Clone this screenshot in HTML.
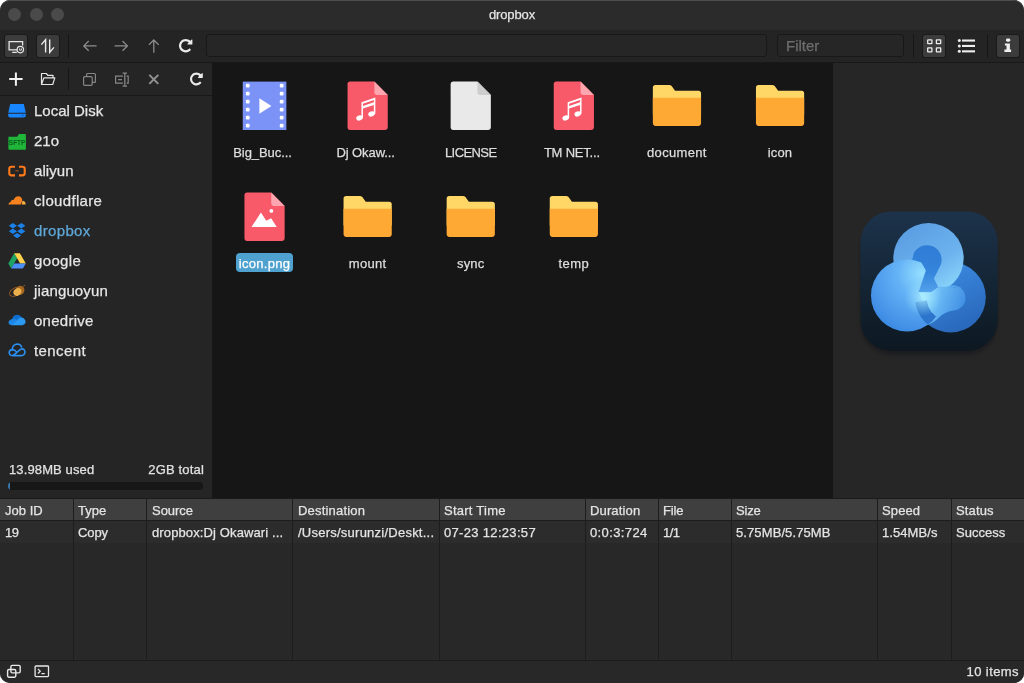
<!DOCTYPE html>
<html>
<head>
<meta charset="utf-8">
<title>dropbox</title>
<style>
*{box-sizing:border-box;margin:0;padding:0}
html,body{width:1024px;height:683px;overflow:hidden;background:#fff;font-family:"Liberation Sans",sans-serif;}
#win{-webkit-text-stroke:.25px;position:absolute;left:0;top:0;width:1024px;height:683px;border-radius:10px;overflow:hidden;background:#252525;opacity:.999;-webkit-font-smoothing:antialiased}
#win::after{content:"";position:absolute;left:0;top:0;right:0;bottom:0;border-radius:10px;box-shadow:inset 0 1px 0 rgba(255,255,255,.16);pointer-events:none;}
.abs{position:absolute}
#title{left:0;top:0;width:1024px;height:30px;background:#2b2b2b;}
#title .t{position:absolute;left:0;width:1024px;top:7px;text-align:center;font-size:13px;line-height:16px;color:#e4e4e4}
.dot{position:absolute;top:8px;width:13px;height:13px;border-radius:50%;background:#4a4a4a}
#tool{left:0;top:30px;width:1024px;height:33px;background:#242424;border-bottom:1px solid #181818;}
.btn{position:absolute;width:22px;height:22px;border-radius:2px;background:#3c3c3c;box-shadow:0 0 0 1px #1a1a1a}
.sep{position:absolute;width:1px;background:#161616}
.inp{position:absolute;height:23px;top:4px;background:#262626;border:1px solid #181818;border-radius:3px}
#side{left:0;top:63px;width:212px;height:435px;background:#252525;}
#sidetool{left:0;top:0;width:212px;height:33px;border-bottom:1px solid #181818;background:#252525}
.item{position:absolute;left:34px;font-size:15px;line-height:20px;color:#e6e6e6;white-space:nowrap}
.ico{position:absolute;left:8px;width:18px;height:18px}
#main{left:212px;top:63px;width:621px;height:435px;background:#161616;}
#right{left:833px;top:63px;width:191px;height:435px;background:#262626;}
.file{position:absolute;width:103px;height:19px;text-align:center;font-size:13px;color:#dedede;line-height:17px;white-space:nowrap}
.lbl{display:inline-block;height:19px;padding:2px 3px 0 3px;border-radius:4px}
.lbl.sel{background:#4fa2d0;color:#fff}
#jobs{filter:grayscale(1);left:0;top:498px;width:1024px;height:162px;background:#282828;border-top:1px solid #1a1a1a;font-size:13px;color:#e2e2e2}
#status{filter:grayscale(1);left:0;top:660px;width:1024px;height:23px;background:#282828;border-top:1px solid #1b1b1b;font-size:13px;color:#e2e2e2}
.th,.td{font-size:13px;line-height:22px;white-space:nowrap;color:#e4e4e4}
</style>
</head>
<body>
<div id="win">
<div id="title" class="abs">
  <div class="dot" style="left:8px"></div><div class="dot" style="left:30px"></div><div class="dot" style="left:51px"></div>
  <div class="t"><span class="ls" style="letter-spacing:-0.14px">dropbox</span></div>
</div>
<div id="tool" class="abs">
  <div class="btn" style="left:5px;top:5px"></div>
  <svg class="abs" style="left:5px;top:5px" width="22" height="22" viewBox="0 0 22 22" fill="none" stroke="#e6e6e6" stroke-width="1.3">
    <path d="M12.2 14.9H4.1V6.6H17.6V10.4"/><path d="M7.2 17.4H11.8" stroke-width="1.2"/>
    <circle cx="15.3" cy="14.6" r="3.2" stroke-width="1.2"/><path d="M14.6 13.4V15.2H16.4V13.4" stroke-width=".9"/>
  </svg>
  <div class="btn" style="left:37px;top:5px"></div>
  <svg class="abs" style="left:37px;top:5px" width="22" height="22" viewBox="0 0 22 22" fill="none" stroke="#ededed" stroke-width="1.4" stroke-linejoin="miter">
    <path d="M4.4 9.6L8.6 4.6V17.6"/><path d="M12.7 4.4V17.4L16.9 12.4"/>
  </svg>
  <div class="sep" style="left:68px;top:4px;height:24px"></div>
  <svg class="abs" style="left:82px;top:8px" width="16" height="16" viewBox="0 0 16 16" fill="none" stroke="#8c8c8c" stroke-width="1.3">
    <path d="M14.6 7.9H1.8M6.7 3L1.8 7.9L6.7 12.8"/>
  </svg>
  <svg class="abs" style="left:113px;top:8px" width="16" height="16" viewBox="0 0 16 16" fill="none" stroke="#8c8c8c" stroke-width="1.3">
    <path d="M1.6 7.9H14.4M9.5 3L14.4 7.9L9.5 12.8"/>
  </svg>
  <svg class="abs" style="left:146px;top:8px" width="16" height="16" viewBox="0 0 16 16" fill="none" stroke="#8c8c8c" stroke-width="1.3">
    <path d="M7.8 14.8V2M2.9 6.9L7.8 2L12.7 6.9"/>
  </svg>
  <svg class="abs" style="left:179px;top:9px" width="14" height="14" viewBox="0 0 1604.776 1604.776"><path fill="#ebebeb" d="M1536 128v448q0 26-19 45t-45 19h-448q-42 0-59-40-17-39 14-69l138-138q-148-137-349-137-104 0-198.500 40.500t-163.500 109.500-109.500 163.500-40.500 198.500 40.500 198.500 109.500 163.500 163.500 109.500 198.500 40.500q119 0 225-52t179-147q7-10 23-12 15 0 25 9l137 138q9 8 9.500 20.500t-7.500 22.500q-109 132-264 204.500t-327 72.500q-156 0-298-61t-245-164-164-245-61-298 61-298 164-245 245-164 298-61q147 0 284.500 55.500t244.500 156.500l130-129q29-31 70-14 39 17 39 59z"/></svg>
  <div class="inp" style="left:206px;width:561px"></div>
  <div class="inp" style="left:777px;width:127px"></div>
  <div class="abs" style="filter:grayscale(1);left:786px;top:7px;font-size:15px;line-height:17px;color:#6e6e6e">Filter</div>
  <div class="sep" style="left:913px;top:4px;height:24px"></div>
  <div class="btn" style="left:923px;top:5px"></div>
  <svg class="abs" style="left:923px;top:5px" width="22" height="22" viewBox="0 0 22 22" fill="none" stroke="#ededed" stroke-width="1.3">
    <rect x="4.7" y="4.8" width="4.2" height="3.9" rx=".4"/><rect x="13.4" y="4.8" width="4.3" height="3.9" rx=".4"/><rect x="4.7" y="12.9" width="4.2" height="4" rx=".4"/><rect x="13.4" y="12.9" width="4.3" height="4" rx=".4"/>
  </svg>
  <svg class="abs" style="left:955px;top:5px" width="22" height="22" viewBox="0 0 22 22" fill="#ededed">
    <rect x="7" y="4.5" width="13" height="2.1"/><rect x="7" y="9.9" width="13" height="2.1"/><rect x="7" y="15.3" width="13" height="2.1"/>
    <circle cx="4.3" cy="5.55" r="1.5"/><circle cx="4.3" cy="10.95" r="1.5"/><circle cx="4.3" cy="16.35" r="1.5"/>
  </svg>
  <div class="sep" style="left:987px;top:4px;height:24px"></div>
  <div class="btn" style="left:997px;top:5px"></div>
  <svg class="abs" style="left:997px;top:5px" width="22" height="22" viewBox="0 0 22 22" fill="#f0f0f0">
    <rect x="9" y="3.5" width="4.3" height="3.2" rx="1.4"/><path d="M7.9 8.4H12.9V14.6H14.1V17H7.4V14.6H9.5V10.6H7.9Z"/>
  </svg>
</div>
<div id="side" class="abs">
  <div id="sidetool" class="abs">
    <svg class="abs" style="left:8px;top:8px" width="16" height="17" viewBox="0 -0.2 16 17" stroke="#f2f2f2" stroke-width="2" fill="none"><path d="M7.9 1.2V14.6M1.2 7.9H14.6"/></svg>
    <svg class="abs" style="left:40px;top:8px" width="16" height="17" viewBox="0 -0.2 16 17" stroke="#e6e6e6" stroke-width="1.2" fill="none" stroke-linejoin="round"><path d="M1.5 13.3V2.3H6.3L7.8 4.1H13V6.7M1.5 13.3L3.9 6.7H14.8L12.7 13.3Z"/></svg>
    <div class="sep" style="left:68px;top:5px;height:22px"></div>
    <svg class="abs" style="left:82px;top:8px" width="16" height="17" viewBox="0 -0.8 16 17" stroke="#868686" stroke-width="1.2" fill="none"><rect x="1.6" y="4.9" width="8.6" height="8.6" rx="1"/><path d="M4.6 4.9V2.6Q4.6 1.7 5.5 1.7H12.5Q13.4 1.7 13.4 2.6V9.6Q13.4 10.5 12.5 10.5H10.2"/></svg>
    <svg class="abs" style="left:114px;top:8px" width="16" height="17" viewBox="0 -0.8 16 17" stroke="#868686" stroke-width="1.2" fill="none"><path d="M9 4.4H1.6V11.4H9M12.6 4.4H14.2V11.4H12.6M4 7.9H8"/><path d="M8.6 1.4H13M8.6 14.4H13M10.8 1.4V14.4" stroke-width="1.3"/></svg>
    <svg class="abs" style="left:146px;top:8px" width="16" height="17" viewBox="0 -0.8 16 17" stroke="#909090" stroke-width="2" fill="none"><path d="M3.3 3.1L12.3 12.1M12.3 3.1L3.3 12.1"/></svg>
    <svg class="abs" style="left:190px;top:9px" width="13" height="14" viewBox="0 -72 1560 1680"><path fill="#ebebeb" d="M1536 128v448q0 26-19 45t-45 19h-448q-42 0-59-40-17-39 14-69l138-138q-148-137-349-137-104 0-198.500 40.500t-163.500 109.500-109.500 163.500-40.500 198.500 40.500 198.500 109.500 163.500 163.500 109.500 198.500 40.500q119 0 225-52t179-147q7-10 23-12 15 0 25 9l137 138q9 8 9.500 20.500t-7.500 22.500q-109 132-264 204.500t-327 72.500q-156 0-298-61t-245-164-164-245-61-298 61-298 164-245 245-164 298-61q147 0 284.500 55.500t244.500 156.500l130-129q29-31 70-14 39 17 39 59z"/></svg>
  </div>
  <svg class="ico" style="top:39px" viewBox="0 0 18 18"><path fill="#1786ff" d="M2.2 2.1H15.8L17.8 10.7H0.2Z"/><path fill="#1786ff" d="M0.2 11.7H17.8V13.6Q17.8 15.6 15.8 15.6H2.2Q0.2 15.6 0.2 13.6Z"/><circle cx="14.8" cy="13.5" r=".7" fill="#0d4f9c"/></svg>
  <div class="item" style="top:38px"><span class="ls" style="letter-spacing:0.0px">Local Disk</span></div>
  <svg class="ico" style="top:69px" viewBox="0 0 18 18"><path fill="#1fb63a" d="M0.4 4.7H9.2L11 1.9H17.1Q17.9 1.9 17.9 2.7V16.9Q17.9 17.7 17.1 17.7H1.2Q0.4 17.7 0.4 16.9Z"/><text x="9.1" y="13.4" font-family="Liberation Sans, sans-serif" font-weight="bold" font-size="6.6" text-anchor="middle" fill="#0b5c1b" textLength="16.5" lengthAdjust="spacingAndGlyphs">SFTP</text></svg>
  <div class="item" style="top:68px">21o</div>
  <svg class="ico" style="top:99px" viewBox="0 0 18 18" fill="none" stroke="#ff7a1a" stroke-width="2.1"><path d="M7 4.7H3.4Q1.3 4.7 1.3 6.8V11.3Q1.3 13.4 3.4 13.4H7"/><path d="M11 4.7H14.6Q16.7 4.7 16.7 6.8V11.3Q16.7 13.4 14.6 13.4H11"/><path d="M7.4 8.8H10.6" stroke="#c2601c" stroke-width=".9"/></svg>
  <div class="item" style="top:98px"><span class="ls" style="letter-spacing:0.09px">aliyun</span></div>
  <svg class="ico" style="top:129px" viewBox="0 0 18 18"><path fill="#f6821f" d="M0.3 12.5Q0.5 10.6 2.6 9.9Q3.3 7.6 5.7 7.9Q7 4.2 10.3 4.2Q13.7 4.4 14.3 8L13 12.5Z"/><path fill="#fbad41" d="M13.7 12.5L14.5 8.7Q17.5 8.9 17.7 12.5Z"/></svg>
  <div class="item" style="top:128px"><span class="ls" style="letter-spacing:0.31px">cloudflare</span></div>
  <svg class="ico" style="top:159px" viewBox="0 0 18 18" fill="#1b80e8"><path d="M4.90 0.95L9.00 3.70L4.90 6.45L0.80 3.70Z"/><path d="M13.30 0.95L17.40 3.70L13.30 6.45L9.20 3.70Z"/><path d="M4.90 6.55L9.00 9.30L4.90 12.05L0.80 9.30Z"/><path d="M13.30 6.55L17.40 9.30L13.30 12.05L9.20 9.30Z"/><path d="M9.10 11.00L13.10 13.60L9.10 16.20L5.10 13.60Z"/></svg>
  <div class="item" style="top:158px;color:#5fa8d8"><span class="ls" style="letter-spacing:0.35px">dropbox</span></div>
  <svg class="ico" style="top:189px" viewBox="0 0 18 18"><path fill="#1ea362" d="M6.2 1.2L9.1 6.2L3.2 16.4L0.3 11.4Z"/><path fill="#ffd04a" d="M6.2 1.2H11.9L17.8 11.4H12.1Z"/><path fill="#4a8ff7" d="M6.1 11.4H17.8L14.9 16.4H3.2Z"/></svg>
  <div class="item" style="top:188px"><span class="ls" style="letter-spacing:0.36px">google</span></div>
  <svg class="ico" style="top:219px" viewBox="0 0 18 18"><ellipse cx="7.6" cy="9.8" rx="6.6" ry="3.9" transform="rotate(-27 7.6 9.8)" fill="none" stroke="#9a5a22" stroke-width=".9"/><ellipse cx="12" cy="8.4" rx="4.3" ry="4.8" transform="rotate(28 12 8.4)" fill="#a5661f"/><ellipse cx="9.4" cy="9.9" rx="4.2" ry="3.5" transform="rotate(-38 9.4 9.9)" fill="#ebb04c"/><path d="M15.2 4.6L16.9 2.9" stroke="#a5661f" stroke-width="1"/></svg>
  <div class="item" style="top:218px"><span class="ls" style="letter-spacing:0.14px">jianguoyun</span></div>
  <svg class="ico" style="top:249px" viewBox="0 0 18 18"><g transform="translate(0,-1.6) scale(1,.97)"><path fill="#0f6fd0" d="M4.2 9.2Q4.8 5.4 8.6 4.6Q12.2 4.2 13.8 7.4L9 11.2Z"/><path fill="#1d86e6" d="M2.6 9.6Q5.4 7.6 8.4 9.6L13 13.6L3.6 15.2Q0.4 14.6 0.5 12.2Q0.6 10.2 2.6 9.6Z"/><path fill="#2b9af3" d="M10.6 8.6Q13.4 6.4 16 8.4Q17.8 10 17.6 12.2Q17.2 15 14.4 15.4H3.6Q7.4 12.2 10.6 8.6Z"/></g></svg>
  <div class="item" style="top:248px"><span class="ls" style="letter-spacing:0.27px">onedrive</span></div>
  <svg class="ico" style="top:279px" viewBox="0 0 18 18" fill="none" stroke="#2a90f2" stroke-width="1.6" stroke-linecap="round"><g transform="translate(0,-1.7) scale(1,.97)"><path d="M4.2 9.8Q4.4 4.4 9 3.8Q12.4 3.8 13.6 6.8"/><path d="M5 15.8L12.4 9.4Q14.6 8 16.2 9.8Q17.8 12.4 16 14.6Q15 15.8 13 15.8H4.8Q1.2 15.6 1.2 12.6Q1.4 9.6 4.6 9.6Q6.8 9.8 8 11.4"/></g></svg>
  <div class="item" style="top:278px"><span class="ls" style="letter-spacing:0.4px">tencent</span></div>
  <div class="abs sb" style="left:9px;top:399px;font-size:13px;line-height:16px;color:#e2e2e2"><span class="ls" style="letter-spacing:0.12px">13.98MB used</span></div>
  <div class="abs sb" style="right:8px;top:399px;font-size:13px;line-height:16px;color:#e2e2e2"><span class="ls" style="letter-spacing:0.17px">2GB total</span></div>
  <div class="abs" style="left:8px;top:419px;width:195px;height:8px;border-radius:4px;background:#171717;overflow:hidden"><div style="width:2px;height:8px;background:#3a78b0"></div></div>
</div>
<div id="main" class="abs">
<svg class="abs" style="left:30px;top:18px" width="45" height="50" viewBox="-0.55 -0.3 45 50"><rect x="0.2" y="0.3" width="43.6" height="48.4" fill="#7b92f6"/><g fill="#fff"><rect x="3.3" y="2.5" width="3.8" height="3.8" rx="1.1"/><rect x="3.3" y="10.5" width="3.8" height="3.8" rx="1.1"/><rect x="3.3" y="18.5" width="3.8" height="3.8" rx="1.1"/><rect x="3.3" y="26.5" width="3.8" height="3.8" rx="1.1"/><rect x="3.3" y="34.5" width="3.8" height="3.8" rx="1.1"/><rect x="3.3" y="42.5" width="3.8" height="3.8" rx="1.1"/><rect x="37.2" y="2.5" width="3.8" height="3.8" rx="1.1"/><rect x="37.2" y="10.5" width="3.8" height="3.8" rx="1.1"/><rect x="37.2" y="18.5" width="3.8" height="3.8" rx="1.1"/><rect x="37.2" y="26.5" width="3.8" height="3.8" rx="1.1"/><rect x="37.2" y="34.5" width="3.8" height="3.8" rx="1.1"/><rect x="37.2" y="42.5" width="3.8" height="3.8" rx="1.1"/></g><path d="M16.8 16.9V32.5L28.9 24.7Z" fill="#fff"/></svg>
<div class="file" style="left:-0.95px;top:78.8px"><span class="lbl"><span class="ls" style="letter-spacing:-0.05px">Big_Buc...</span></span></div>
<svg class="abs" style="left:135px;top:18px" width="42" height="50" viewBox="-0.15 -0.3 42 50"><path fill="#f95a6a" d="M3 0.3H27.2L40.6 13.6V45.7Q40.6 48.7 37.6 48.7H3Q0.4 48.7 0.4 45.7V3Q0.4 0.3 3 0.3Z"/><path fill="#fda6b0" d="M27.2 0.3L40.6 13.6H29.6Q27.2 13.6 27.2 11.2Z"/><g fill="#fff"><ellipse cx="12.4" cy="36.6" rx="3.4" ry="2.5" transform="rotate(-20 12.4 36.6)"/><ellipse cx="24.4" cy="32.6" rx="3.4" ry="2.5" transform="rotate(-20 24.4 32.6)"/><path d="M14.3 21L28.2 16.3V32.4H26.7V23.6L15.8 27.3V36.4H14.3Z"/><path d="M15.8 22.4V24.6L26.7 20.9V18.7Z" fill="#f95a6a"/></g></svg>
<div class="file" style="left:102.15px;top:78.8px"><span class="lbl"><span class="ls" style="letter-spacing:-0.11px">Dj Okaw...</span></span></div>
<svg class="abs" style="left:238px;top:18px" width="42" height="50" viewBox="-0.25 -0.3 42 50"><path fill="#e9e9e9" d="M3 0.3H27.2L40.6 13.6V45.7Q40.6 48.7 37.6 48.7H3Q0.4 48.7 0.4 45.7V3Q0.4 0.3 3 0.3Z"/><path fill="#cdcdcd" d="M27.2 0.3L40.6 13.6H29.6Q27.2 13.6 27.2 11.2Z"/></svg>
<div class="file" style="left:207.25px;top:78.8px"><span class="lbl"><span class="ls" style="letter-spacing:-0.59px">LICENSE</span></span></div>
<svg class="abs" style="left:341px;top:18px" width="42" height="50" viewBox="-0.35 -0.3 42 50"><path fill="#f95a6a" d="M3 0.3H27.2L40.6 13.6V45.7Q40.6 48.7 37.6 48.7H3Q0.4 48.7 0.4 45.7V3Q0.4 0.3 3 0.3Z"/><path fill="#fda6b0" d="M27.2 0.3L40.6 13.6H29.6Q27.2 13.6 27.2 11.2Z"/><g fill="#fff"><ellipse cx="12.4" cy="36.6" rx="3.4" ry="2.5" transform="rotate(-20 12.4 36.6)"/><ellipse cx="24.4" cy="32.6" rx="3.4" ry="2.5" transform="rotate(-20 24.4 32.6)"/><path d="M14.3 21L28.2 16.3V32.4H26.7V23.6L15.8 27.3V36.4H14.3Z"/><path d="M15.8 22.4V24.6L26.7 20.9V18.7Z" fill="#f95a6a"/></g></svg>
<div class="file" style="left:308.35px;top:78.8px"><span class="lbl"><span class="ls" style="letter-spacing:-0.21px">TM NET...</span></span></div>
<svg class="abs" style="left:440px;top:21px" width="50" height="43" viewBox="-0.45 -0.5 50 43"><path fill="#ffd766" d="M3 0.4H16.6Q18.2 0.4 19.2 1.6L22.6 6.2H46Q48.6 6.2 48.6 8.8V30H0.4V3Q0.4 0.4 3 0.4Z"/><path fill="#ffa935" d="M0.4 13.3H48.6V38.6Q48.6 41.4 45.8 41.4H3.2Q0.4 41.4 0.4 38.6Z"/></svg>
<div class="file" style="left:413.45px;top:78.8px"><span class="lbl"><span class="ls" style="letter-spacing:0.33px">document</span></span></div>
<svg class="abs" style="left:543px;top:21px" width="50" height="43" viewBox="-0.55 -0.5 50 43"><path fill="#ffd766" d="M3 0.4H16.6Q18.2 0.4 19.2 1.6L22.6 6.2H46Q48.6 6.2 48.6 8.8V30H0.4V3Q0.4 0.4 3 0.4Z"/><path fill="#ffa935" d="M0.4 13.3H48.6V38.6Q48.6 41.4 45.8 41.4H3.2Q0.4 41.4 0.4 38.6Z"/></svg>
<div class="file" style="left:516.55px;top:78.8px"><span class="lbl"><span class="ls" style="letter-spacing:0.14px">icon</span></span></div>
<svg class="abs" style="left:32px;top:129px" width="42" height="50" viewBox="-0.05 -0.3 42 50"><path fill="#f95a6a" d="M3 0.3H27.2L40.6 13.6V45.7Q40.6 48.7 37.6 48.7H3Q0.4 48.7 0.4 45.7V3Q0.4 0.3 3 0.3Z"/><path fill="#fda6b0" d="M27.2 0.3L40.6 13.6H29.6Q27.2 13.6 27.2 11.2Z"/><path fill="#fff" d="M7.4 34.8L16.9 20.2L22.2 28.4L27.1 25.9L32.7 34.8Z"/><circle cx="27.3" cy="18.6" r="1.9" fill="#fff"/></svg>
<div class="file" style="left:1.05px;top:189.8px"><span class="lbl sel"><span class="ls" style="letter-spacing:0.32px">icon.png</span></span></div>
<svg class="abs" style="left:131px;top:132px" width="50" height="43" viewBox="-0.15 -0.5 50 43"><path fill="#ffd766" d="M3 0.4H16.6Q18.2 0.4 19.2 1.6L22.6 6.2H46Q48.6 6.2 48.6 8.8V30H0.4V3Q0.4 0.4 3 0.4Z"/><path fill="#ffa935" d="M0.4 13.3H48.6V38.6Q48.6 41.4 45.8 41.4H3.2Q0.4 41.4 0.4 38.6Z"/></svg>
<div class="file" style="left:104.15px;top:189.8px"><span class="lbl"><span class="ls" style="letter-spacing:0.31px">mount</span></span></div>
<svg class="abs" style="left:234px;top:132px" width="50" height="43" viewBox="-0.25 -0.5 50 43"><path fill="#ffd766" d="M3 0.4H16.6Q18.2 0.4 19.2 1.6L22.6 6.2H46Q48.6 6.2 48.6 8.8V30H0.4V3Q0.4 0.4 3 0.4Z"/><path fill="#ffa935" d="M0.4 13.3H48.6V38.6Q48.6 41.4 45.8 41.4H3.2Q0.4 41.4 0.4 38.6Z"/></svg>
<div class="file" style="left:207.25px;top:189.8px"><span class="lbl"><span class="ls" style="letter-spacing:0.14px">sync</span></span></div>
<svg class="abs" style="left:337px;top:132px" width="50" height="43" viewBox="-0.35 -0.5 50 43"><path fill="#ffd766" d="M3 0.4H16.6Q18.2 0.4 19.2 1.6L22.6 6.2H46Q48.6 6.2 48.6 8.8V30H0.4V3Q0.4 0.4 3 0.4Z"/><path fill="#ffa935" d="M0.4 13.3H48.6V38.6Q48.6 41.4 45.8 41.4H3.2Q0.4 41.4 0.4 38.6Z"/></svg>
<div class="file" style="left:310.35px;top:189.8px"><span class="lbl"><span class="ls" style="letter-spacing:0.42px">temp</span></span></div>
</div>
<div id="right" class="abs">
<svg class="abs" style="left:21px;top:142px" width="150" height="157" viewBox="-6 -6.5 150 157">
<defs>
<linearGradient id="bg" x1="0" y1="0" x2="0" y2="1"><stop offset="0" stop-color="#1d334b"/><stop offset=".45" stop-color="#152738"/><stop offset="1" stop-color="#0d1821"/></linearGradient>
<linearGradient id="gt" gradientUnits="userSpaceOnUse" x1="48" y1="14" x2="92" y2="78"><stop offset="0" stop-color="#5a9de2"/><stop offset=".6" stop-color="#6cb2ee"/><stop offset="1" stop-color="#8ad6fb"/></linearGradient>
<radialGradient id="gl" gradientUnits="userSpaceOnUse" cx="62" cy="62" r="62"><stop offset="0" stop-color="#95e0ff"/><stop offset=".4" stop-color="#64b2f6"/><stop offset="1" stop-color="#3d8ae4"/></radialGradient>
<linearGradient id="gr" gradientUnits="userSpaceOnUse" x1="80" y1="55" x2="112" y2="120"><stop offset="0" stop-color="#3a8ae0"/><stop offset="1" stop-color="#2865b8"/></linearGradient>
<linearGradient id="gk" gradientUnits="userSpaceOnUse" x1="68" y1="30" x2="66" y2="82"><stop offset="0" stop-color="#2d7ad4"/><stop offset=".6" stop-color="#3585dc"/><stop offset="1" stop-color="#55a4ec"/></linearGradient>
<linearGradient id="gb" gradientUnits="userSpaceOnUse" x1="60" y1="82" x2="104" y2="98"><stop offset="0" stop-color="#a4ebff"/><stop offset=".4" stop-color="#6ab9f4"/><stop offset="1" stop-color="#3f8de2"/></linearGradient>
<radialGradient id="glow" gradientUnits="userSpaceOnUse" cx="63" cy="86" r="19"><stop offset="0" stop-color="#b0f0ff" stop-opacity=".85"/><stop offset="1" stop-color="#8fdcff" stop-opacity="0"/></radialGradient>
<filter id="sh" x="-10%" y="-10%" width="120%" height="125%"><feGaussianBlur stdDeviation="2.2"/></filter>
<clipPath id="cl"><path d="M0 0H60.7V49.7L65.9 58.9L58.5 80.8H71L78.3 75.7H112V140H0Z"/></clipPath>
<clipPath id="cld"><circle cx="47" cy="84" r="36"/></clipPath>
</defs>
<rect x="2" y="6" width="134" height="136" rx="30" fill="#0a0f14" opacity=".55" filter="url(#sh)"/>
<rect x="0.4" y="0" width="137.4" height="139.5" rx="31" fill="url(#bg)"/>
<circle cx="90.6" cy="85.8" r="35.2" fill="url(#gr)"/>
<circle cx="68.5" cy="46.7" r="35.2" fill="url(#gt)"/>
<path fill="url(#gk)" d="M53.4 42.8A14.6 14.6 0 1 1 80.5 53.8L73.9 66.9L78.3 75.7L71 82H57L52 50Z"/>
<g clip-path="url(#cl)"><circle cx="47" cy="84" r="36" fill="url(#gl)"/></g>
<circle cx="92.9" cy="86.4" r="12.6" fill="url(#gb)"/><path d="M78.3 75.9H97" stroke="#3f8fe0" stroke-opacity=".55" stroke-width=".8"/>
<path fill="url(#gb)" d="M58.5 80.8H71L78.3 75.7H93V99Q86 100 80.6 104.5A36 36 0 0 1 67.6 113.4A24 24 0 0 1 66.8 94.8Z"/>
<g clip-path="url(#cld)"><path d="M61.1 89.9A29.75 29.75 0 0 0 78 112.8" fill="none" stroke="#2c74cc" stroke-width="11.5"/><circle cx="63" cy="86" r="19" fill="url(#glow)" clip-path="url(#cl)"/></g>
</svg>
</div>
<div id="jobs" class="abs">
<div class="abs" style="left:0;top:0;width:1024px;height:22px;background:#3f3f3f;border-bottom:1px solid #1d1d1d"></div>
<div class="abs" style="left:0;top:22px;width:1024px;height:22px;background:#2c2c2c"></div>
<div class="abs th" style="left:5px;top:1px"><span class="ls" style="letter-spacing:0.02px">Job ID</span></div>
<div class="abs td" style="left:5px;top:23px"><span class="ls" style="letter-spacing:-0.6px">19</span></div>
<div class="abs th" style="left:78px;top:1px"><span class="ls" style="letter-spacing:0.05px">Type</span></div>
<div class="abs td" style="left:78px;top:23px"><span class="ls" style="letter-spacing:-0.09px">Copy</span></div>
<div class="abs" style="left:73px;top:0;width:1px;height:161px;background:#1d1d1d"></div>
<div class="abs th" style="left:152px;top:1px"><span class="ls" style="letter-spacing:-0.03px">Source</span></div>
<div class="abs td" style="left:152px;top:23px"><span class="ls" style="letter-spacing:0.12px">dropbox:Dj Okawari ...</span></div>
<div class="abs" style="left:146px;top:0;width:1px;height:161px;background:#1d1d1d"></div>
<div class="abs th" style="left:298px;top:1px"><span class="ls" style="letter-spacing:0.19px">Destination</span></div>
<div class="abs td" style="left:298px;top:23px"><span class="ls" style="letter-spacing:0.24px">/Users/surunzi/Deskt...</span></div>
<div class="abs" style="left:292px;top:0;width:1px;height:161px;background:#1d1d1d"></div>
<div class="abs th" style="left:444px;top:1px"><span class="ls" style="letter-spacing:0.25px">Start Time</span></div>
<div class="abs td" style="left:444px;top:23px"><span class="ls" style="letter-spacing:0.32px">07-23 12:23:57</span></div>
<div class="abs" style="left:439px;top:0;width:1px;height:161px;background:#1d1d1d"></div>
<div class="abs th" style="left:590px;top:1px"><span class="ls" style="letter-spacing:0.14px">Duration</span></div>
<div class="abs td" style="left:590px;top:23px"><span class="ls" style="letter-spacing:0.39px">0:0:3:724</span></div>
<div class="abs" style="left:585px;top:0;width:1px;height:161px;background:#1d1d1d"></div>
<div class="abs th" style="left:663px;top:1px"><span class="ls" style="letter-spacing:-0.14px">File</span></div>
<div class="abs td" style="left:663px;top:23px"><span class="ls" style="letter-spacing:-0.6px">1/1</span></div>
<div class="abs" style="left:658px;top:0;width:1px;height:161px;background:#1d1d1d"></div>
<div class="abs th" style="left:736px;top:1px"><span class="ls" style="letter-spacing:-0.15px">Size</span></div>
<div class="abs td" style="left:736px;top:23px"><span class="ls" style="letter-spacing:0.1px">5.75MB/5.75MB</span></div>
<div class="abs" style="left:731px;top:0;width:1px;height:161px;background:#1d1d1d"></div>
<div class="abs th" style="left:882px;top:1px"><span class="ls" style="letter-spacing:0.12px">Speed</span></div>
<div class="abs td" style="left:882px;top:23px"><span class="ls" style="letter-spacing:0.07px">1.54MB/s</span></div>
<div class="abs" style="left:877px;top:0;width:1px;height:161px;background:#1d1d1d"></div>
<div class="abs th" style="left:956px;top:1px"><span class="ls" style="letter-spacing:0.14px">Status</span></div>
<div class="abs td" style="left:956px;top:23px"><span class="ls" style="letter-spacing:0.04px">Success</span></div>
<div class="abs" style="left:951px;top:0;width:1px;height:161px;background:#1d1d1d"></div>
</div>
<div id="status" class="abs">
  <svg class="abs" style="left:6px;top:2px" width="16" height="17" viewBox="0 -0.2 16 17" fill="none" stroke="#e8e8e8" stroke-width="1.4" stroke-linejoin="round"><rect x="1.6" y="6.3" width="8.2" height="7.7" rx="1.4"/><rect x="4.9" y="2.2" width="9.3" height="7.5" rx="1.4"/></svg>
  <svg class="abs" style="left:34px;top:3px" width="16" height="15" viewBox="0 -0.5 16 15" fill="none" stroke="#e8e8e8" stroke-width="1.3"><rect x="1.1" y="1.5" width="13.4" height="10.6" rx=".8"/><path d="M3.9 4.4L6.3 6.7L3.9 9M7.4 9.2H10.8" stroke-width="1.2"/></svg>
  <div class="abs sb" style="right:5px;top:3px;font-size:13px;line-height:16px;color:#e4e4e4"><span class="ls" style="letter-spacing:0.42px">10 items</span></div>
</div>
</div>
</body>
</html>
